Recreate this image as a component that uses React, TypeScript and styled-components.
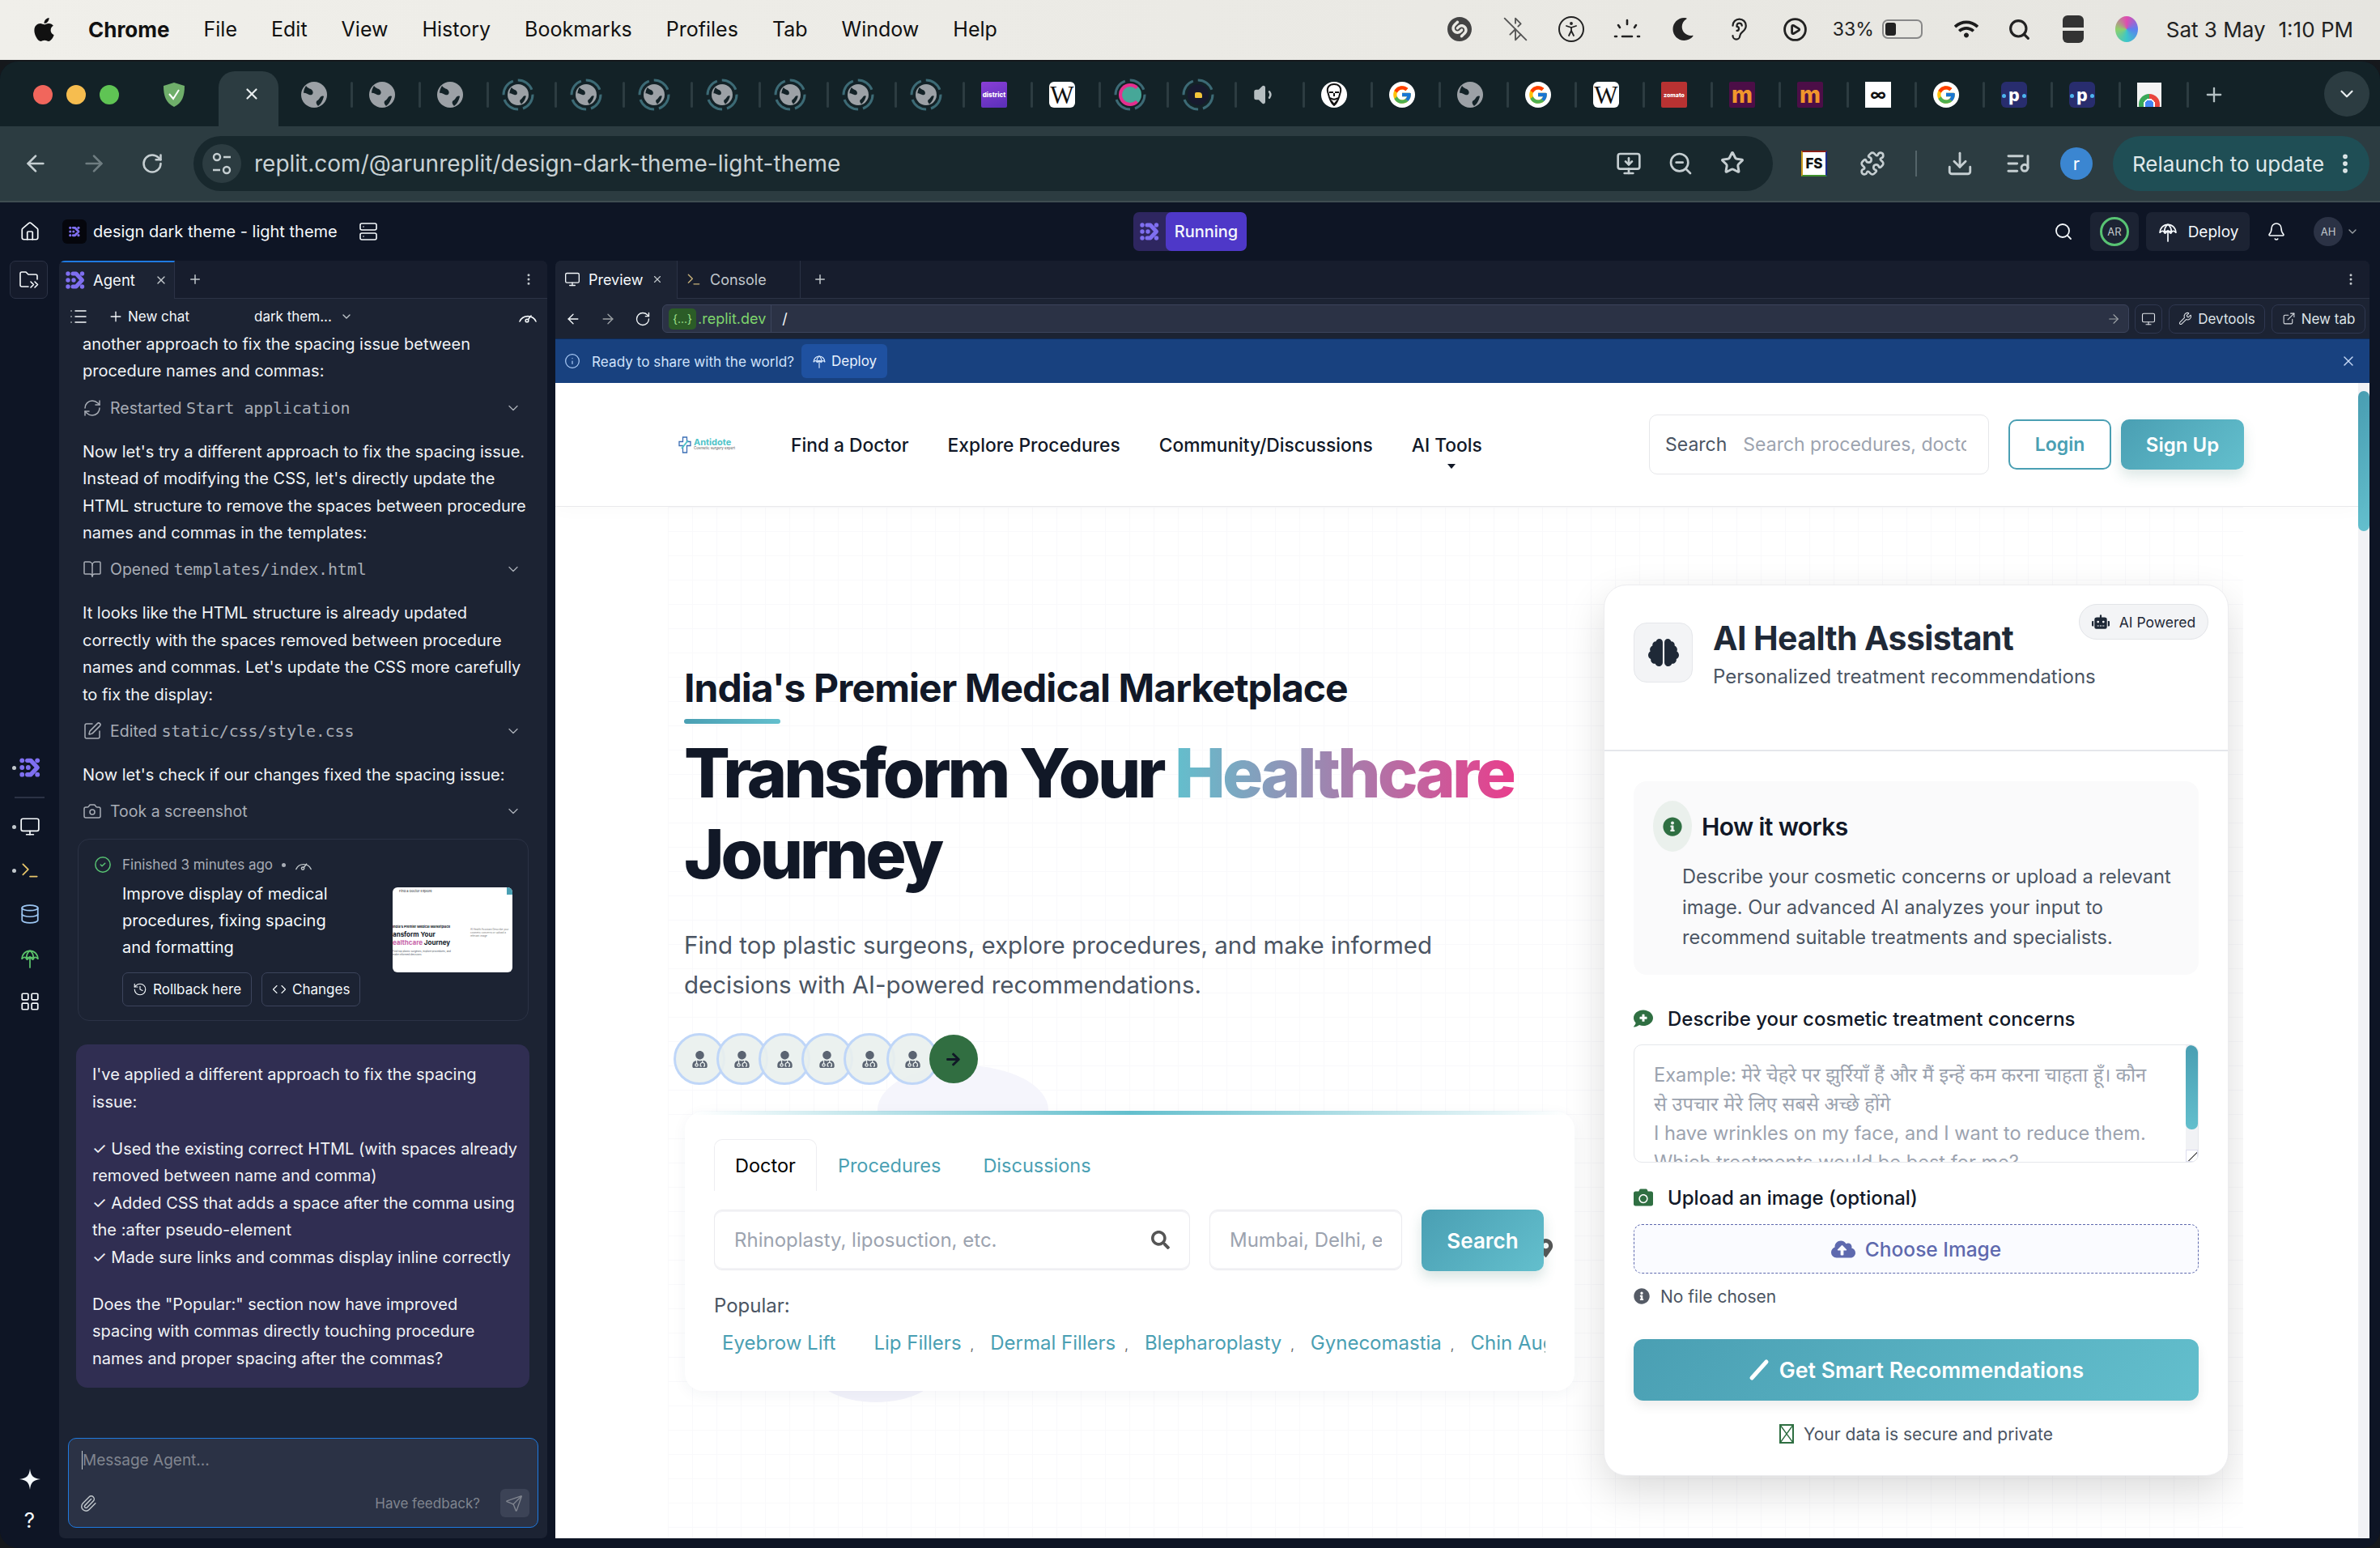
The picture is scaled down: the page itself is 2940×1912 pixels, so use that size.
import styled, { createGlobalStyle } from "styled-components";
import {
  ArrowLeft,
  ArrowRight,
  BluetoothOff,
  Bell,
  BookOpen,
  Camera,
  ChevronDown,
  CircleCheck,
  CirclePlay,
  Code,
  Database,
  Download,
  Ear,
  ExternalLink,
  History,
  House,
  Info,
  LayoutGrid,
  ListMusic,
  List,
  Monitor,
  MonitorDown,
  MoreVertical,
  Paperclip,
  PersonStanding,
  Plus,
  Puzzle,
  RefreshCw,
  RotateCw,
  Search,
  Send,
  Server,
  SquarePen,
  Star,
  Terminal,
  Volume1,
  Wrench,
  X,
  ZoomOut,
} from "lucide-react";
import {
  FaApple,
  FaArrowRight,
  FaBrain,
  FaCamera,
  FaCloudUploadAlt,
  FaCommentMedical,
  FaInfoCircle,
  FaMapMarkerAlt,
  FaMoon,
  FaRobot,
  FaSearch,
  FaUserMd,
  FaWifi,
} from "react-icons/fa";
import { FcGoogle } from "react-icons/fc";
import { SiShazam } from "react-icons/si";

const UI_FONT = `Inter, "Noto Sans", sans-serif`;
const PAGE_FONT = `Inter, "Noto Sans Devanagari", "Noto Sans", sans-serif`;
const TEAL = "#4a9fb3";
const TEAL_LIGHT = "#63bfcd";

const GlobalStyle = createGlobalStyle`
  html, body {
    margin: 0;
    padding: 0;
    background: #15181c;
  }
  * {
    box-sizing: border-box;
  }
`;

/* ---------- small drawings ---------- */

function AgentLogo({ size = 24 }: { size?: number }) {
  return (
    <svg width={size} height={size} viewBox="0 0 24 24" fill="#7f6ff0">
      <circle cx="3" cy="4" r="2.7" />
      <circle cx="20.5" cy="4" r="2.7" />
      <circle cx="3" cy="12" r="2.7" />
      <circle cx="10" cy="12" r="2.7" />
      <circle cx="3" cy="20" r="2.7" />
      <circle cx="20.5" cy="20" r="2.7" />
      <path d="M9 4 H13 L20.5 12 L13 20 H9" fill="none" stroke="#7f6ff0" strokeWidth="5" strokeLinecap="round" strokeLinejoin="round" />
    </svg>
  );
}

function GaugeGlyph({ size = 24, color = "#f5f9fc" }: { size?: number; color?: string }) {
  return (
    <svg width={size} height={size} viewBox="0 0 24 24" fill="none" stroke={color} strokeWidth="1.6" strokeLinecap="round">
      <path d="M2 18a11 11 0 0 1 20 0" />
      <circle cx="11" cy="17" r="1.8" />
      <path d="M12.5 15.5 L16 11" />
    </svg>
  );
}

function DeployGlyph({ size = 24, color = "currentColor" }: { size?: number; color?: string }) {
  return (
    <svg width={size} height={size} viewBox="0 0 24 24" fill="none" stroke={color} strokeWidth="1.6" strokeLinecap="round">
      <path d="M3 13a9 9 0 0 1 18 0" />
      <path d="M3 13c2-2 4-2 5 0 1-2 7-2 8 0 1-2 3-2 5 0" />
      <path d="M12 4c-3 2-4 5-4 9M12 4c3 2 4 5 4 9" />
      <path d="M12 23V11M9 14l3-3 3 3" />
    </svg>
  );
}

function FolderJump() {
  return (
    <svg width="26" height="24" viewBox="0 0 26 24" fill="none" stroke="#f5f9fc" strokeWidth="1.6" strokeLinecap="round" strokeLinejoin="round">
      <path d="M12 20H4a2 2 0 0 1-2-2V4a2 2 0 0 1 2-2h5l3 3h9a2 2 0 0 1 2 2v4" />
      <path d="M15 14l3.5 3.5L15 21M20 14l3.5 3.5L20 21" />
    </svg>
  );
}

function TuneIcon() {
  return (
    <svg width="24" height="30" viewBox="0 0 24 30" fill="none" stroke="#c5ced1" strokeWidth="2.4">
      <circle cx="6" cy="7" r="4" />
      <path d="M14 7h9M1 23h9" />
      <circle cx="18" cy="23" r="4" />
    </svg>
  );
}

function LogoCross() {
  return (
    <svg width="16" height="21" viewBox="0 0 16 21" fill="none" stroke="#3b6fb5" strokeWidth="1.3">
      <path d="M5.5 1h5v5.5H15v5h-4.5V20h-5v-8.500H1v-5h4.500Z" />
      <path d="M4 15 L12 5" stroke="#4ec3c8" strokeWidth="2" />
    </svg>
  );
}

function GlobeMark({ size = 32 }: { size?: number }) {
  return (
    <svg width={size} height={size} viewBox="0 0 32 32">
      <circle cx="16" cy="16" r="16" fill="#9ca1a6" />
      <path d="M6 5c3 4 6 3 8 6 2 4-1 6-4 5-3-1-5-3-7-2 0-3 1-6 3-9Z" fill="#132227" />
      <path d="M28 18c-2-1-4 0-5 2-1 2-3 3-4 4-1 2 0 4 2 6 3-2 6-7 7-12Z" fill="#132227" />
    </svg>
  );
}

function SpinRing({ children }: { children: React.ReactNode }) {
  return (
    <RingBox>
      <svg width="40" height="40" viewBox="0 0 40 40" fill="none" stroke="#3c6a75" strokeWidth="3">
        <circle cx="20" cy="20" r="18" strokeDasharray="22 6" />
      </svg>
      {children}
    </RingBox>
  );
}

const RingBox = styled.div`
  position: relative;
  width: 40px;
  height: 40px;
  margin-left: -4px;
  display: flex;
  align-items: center;
  justify-content: center;

  svg:first-child {
    position: absolute;
    inset: 0;
  }
`;

function KfcFace() {
  return (
    <svg width="32" height="32" viewBox="0 0 32 32">
      <circle cx="16" cy="16" r="16" fill="#fff" />
      <path d="M16 3c-6 0-9 4-8 9l2 7c1 3 3 8 6 10 3-2 5-7 6-10l2-7c1-5-2-9-8-9Z" fill="none" stroke="#111" strokeWidth="2" />
      <path d="M10 13h5M17 13h5M16 14v4M11 20c3 2 7 2 10 0M12 23l4 5 4-5" fill="none" stroke="#111" strokeWidth="2" />
    </svg>
  );
}

function WandIcon() {
  return (
    <svg width="26" height="28" viewBox="0 0 26 28" fill="none" stroke="#fff" strokeWidth="5" strokeLinecap="round">
      <path d="M4 24 L22 4" />
    </svg>
  );
}

function MissingGlyph() {
  return (
    <svg width="18" height="24" viewBox="0 0 18 24" fill="none" stroke="#2f6f42" strokeWidth="2">
      <rect x="1" y="1" width="16" height="22" />
      <path d="M1 1 L17 23 M17 1 L1 23" strokeWidth="1.4" />
    </svg>
  );
}

function BrightnessLow() {
  return (
    <svg width="34" height="30" viewBox="0 0 34 30" fill="#222" stroke="#222" strokeWidth="2.6" strokeLinecap="round">
      <path d="M17 4v5M6 10l2 3M28 10l-2 3M2 24h2M30 24h2M11 24h12" />
    </svg>
  );
}

type TabKind =
  | "globe" | "spin" | "district" | "wiki" | "pink" | "spinDark" | "speaker" | "kfc"
  | "google" | "zomato" | "magic" | "infinity" | "paytm" | "store";

function Favicon({ kind }: { kind: TabKind }) {
  switch (kind) {
    case "globe":
      return <GlobeMark />;
    case "spin":
      return (
        <SpinRing>
          <GlobeMark size={26} />
        </SpinRing>
      );
    case "district":
      return (
        <SquareIcon $bg="linear-gradient(160deg,#8a3fd6,#5a2fb8)" $color="#fff">
          <DistrictText>district</DistrictText>
        </SquareIcon>
      );
    case "wiki":
      return <SquareIcon $bg="#fff" $color="#111" $radius={6} $serif>W</SquareIcon>;
    case "pink":
      return (
        <SpinRing>
          <PinkDisc />
        </SpinRing>
      );
    case "spinDark":
      return (
        <SpinRing>
          <YellowDisc />
        </SpinRing>
      );
    case "speaker":
      return <Volume1 size={30} color="#b6bec1" fill="#b6bec1" />;
    case "kfc":
      return <KfcFace />;
    case "google":
      return (
        <RoundIcon>
          <FcGoogle size={26} />
        </RoundIcon>
      );
    case "zomato":
      return (
        <SquareIcon $bg="#b83232" $color="#fff">
          <ZomatoText>zomato</ZomatoText>
        </SquareIcon>
      );
    case "magic":
      return <SquareIcon $bg="#4c0e47" $color="#f0952c" $bold>m</SquareIcon>;
    case "infinity":
      return (
        <SquareIcon $bg="#fff" $color="#111" $radius={0}>
          <InfinityText>∞</InfinityText>
        </SquareIcon>
      );
    case "paytm":
      return (
        <SquareIcon $bg="#282d6e" $color="#fff" $radius={6} $bold>
          <PaytmText>p</PaytmText>
        </SquareIcon>
      );
    case "store":
      return <StoreBag />;
  }
}

const SquareIcon = styled.div<{ $bg: string; $color: string; $radius?: number; $serif?: boolean; $bold?: boolean }>`
  width: 32px;
  height: 32px;
  display: flex;
  align-items: center;
  justify-content: center;
  background: ${(p) => p.$bg};
  color: ${(p) => p.$color};
  border-radius: ${(p) => p.$radius ?? 2}px;
  font-family: ${(p) => (p.$serif ? `"Liberation Serif", serif` : `Inter, sans-serif`)};
  font-size: ${(p) => (p.$serif ? 31 : 28)}px;
  font-weight: ${(p) => (p.$bold ? 800 : 400)};
  line-height: 1;
  overflow: hidden;
`;

const DistrictText = styled.span`
  font-size: 8px;
  font-weight: 800;
`;

const ZomatoText = styled.span`
  font-size: 7px;
  font-weight: 800;
`;

const InfinityText = styled.span`
  font-size: 20px;
  font-weight: 700;
`;

const PaytmText = styled.span`
  position: relative;
  font-size: 21px;

  &::before,
  &::after {
    content: "";
    position: absolute;
    top: 9px;
    width: 5px;
    height: 5px;
    border-radius: 50%;
    background: #4db4ee;
  }
  &::before {
    left: -8px;
  }
  &::after {
    right: -8px;
  }
`;

const RoundIcon = styled.div`
  width: 32px;
  height: 32px;
  border-radius: 50%;
  background: #fff;
  display: flex;
  align-items: center;
  justify-content: center;
`;

const PinkDisc = styled.div`
  width: 28px;
  height: 28px;
  border-radius: 50%;
  background: #46a798;
  border: 4px solid #e52f8f;
  border-right-color: transparent;
`;

const YellowDisc = styled.div`
  width: 26px;
  height: 26px;
  border-radius: 50%;
  background: #171a2e;
  display: flex;
  align-items: center;
  justify-content: center;

  &::after {
    content: "";
    width: 9px;
    height: 7px;
    background: #f2c53a;
    border-radius: 2px 4px 1px 1px;
  }
`;

const StoreBag = styled.div`
  width: 30px;
  height: 30px;
  background: #f3f3f3;
  display: flex;
  align-items: flex-end;
  justify-content: center;
  overflow: hidden;

  &::after {
    content: "";
    width: 26px;
    height: 26px;
    margin-bottom: -10px;
    border-radius: 50%;
    background:
      radial-gradient(circle, #4285f4 0 28%, #fff 29% 38%, transparent 39%),
      conic-gradient(#e8453c 0 120deg, #f9bb2d 120deg 240deg, #3aa757 240deg);
  }
`;

/* ---------- data ---------- */

const MENU_ITEMS = ["File", "Edit", "View", "History", "Bookmarks", "Profiles", "Tab", "Window", "Help"];

const TABS: TabKind[] = [
  "globe", "globe", "globe",
  "spin", "spin", "spin", "spin", "spin", "spin", "spin",
  "district", "wiki", "pink", "spinDark", "speaker", "kfc", "google", "globe", "google",
  "wiki", "zomato", "magic", "magic", "infinity", "google", "paytm", "paytm", "store",
];

const POPULAR = ["Lip Fillers", "Dermal Fillers", "Blepharoplasty", "Gynecomastia", "Chin Augmentation"];

export default function App() {
  return (
    <>
      <GlobalStyle />
      <Desktop>
        <MenuBar>
          <FaApple size={33} />
          <AppName>Chrome</AppName>
          {MENU_ITEMS.map((item) => (
            <MenuItem key={item}>{item}</MenuItem>
          ))}
          <StatusArea>
            <StatusSlot><SiShazam size={30} color="#444" /></StatusSlot>
            <StatusSlot><BluetoothOff size={32} color="#555" strokeWidth={1.4} /></StatusSlot>
            <StatusSlot><RoundOutline><PersonStanding size={24} strokeWidth={1.8} /></RoundOutline></StatusSlot>
            <StatusSlot><BrightnessLow /></StatusSlot>
            <StatusSlot><FaMoon size={28} color="#222" /></StatusSlot>
            <StatusSlot><Ear size={30} color="#222" strokeWidth={1.8} /></StatusSlot>
            <StatusSlot><CirclePlay size={31} color="#222" strokeWidth={2.2} /></StatusSlot>
            <BatteryText>33%</BatteryText>
            <Battery />
            <WideSlot><FaWifi size={30} color="#1c1c1c" /></WideSlot>
            <WideSlot><Search size={29} color="#222" strokeWidth={2.6} /></WideSlot>
            <WideSlot><ControlCenter /></WideSlot>
            <WideSlot><SiriOrb /></WideSlot>
            <ClockText>Sat 3 May</ClockText>
            <ClockText>1:10 PM</ClockText>
          </StatusArea>
        </MenuBar>

        <BrowserWindow>
          <TabStrip>
            <TrafficLights>
              <Light $color="#f1665c" />
              <Light $color="#f6bd4f" />
              <Light $color="#5fc454" />
            </TrafficLights>
            <ShieldBox>
              <svg width="32" height="32" viewBox="0 0 32 32">
                <path d="M16 1 L29 5 C29 18 26 26 16 31 C6 26 3 18 3 5 Z" fill="#6fae6a" />
                <path d="M10 15l5 6 7-11" fill="none" stroke="#fff" strokeWidth="2" />
              </svg>
            </ShieldBox>
            <ActiveTab>
              <X size={22} color="#e8edee" strokeWidth={2.4} />
            </ActiveTab>
            {TABS.map((kind, i) => (
              <TabCell key={i}>
                <Favicon kind={kind} />
              </TabCell>
            ))}
            <NewTabSlot>
              <Plus size={28} color="#b4c0c3" />
            </NewTabSlot>
            <TabSearch>
              <ChevronDown size={26} color="#e8edee" />
            </TabSearch>
          </TabStrip>

          <Toolbar>
            <ToolSlot><ArrowLeft size={32} color="#c5ced1" strokeWidth={2} /></ToolSlot>
            <ToolSlot><ArrowRight size={32} color="#6f7d81" strokeWidth={2} /></ToolSlot>
            <ToolSlot><RotateCw size={28} color="#c5ced1" strokeWidth={2.2} /></ToolSlot>
            <Omnibox>
              <TuneButton><TuneIcon /></TuneButton>
              <UrlText>replit.com/@arunreplit/design-dark-theme-light-theme</UrlText>
              <OmniActions>
                <OmniSlot><MonitorDown size={32} color="#c5ced1" strokeWidth={2} /></OmniSlot>
                <OmniSlot><ZoomOut size={32} color="#c5ced1" strokeWidth={2} /></OmniSlot>
                <OmniSlot><Star size={30} color="#c5ced1" strokeWidth={2.4} /></OmniSlot>
              </OmniActions>
            </Omnibox>
            <FirstExtension>
              <FsIcon>FS</FsIcon>
            </FirstExtension>
            <ToolSlot><Puzzle size={32} color="#c5ced1" strokeWidth={2} /></ToolSlot>
            <ToolDivider />
            <ToolSlot><Download size={34} color="#c5ced1" strokeWidth={2} /></ToolSlot>
            <ToolSlot><ListMusic size={32} color="#c5ced1" strokeWidth={2.2} /></ToolSlot>
            <ToolSlot><ProfileDot>r</ProfileDot></ToolSlot>
            <RelaunchPill>
              Relaunch to update
              <MoreVertical size={30} color="#dfe8ea" strokeWidth={2.6} />
            </RelaunchPill>
          </Toolbar>

          <Shell>
            <AppHeader>
              <HeaderLeft>
                <HomeSlot><House size={26} color="#f5f9fc" strokeWidth={1.6} /></HomeSlot>
                <ProjectIcon><AgentLogo size={14} /></ProjectIcon>
                <ProjectTitle>design dark theme - light theme</ProjectTitle>
                <Server size={24} color="#f5f9fc" strokeWidth={1.6} />
              </HeaderLeft>
              <RunBadge>
                <RunIcon><AgentLogo size={24} /></RunIcon>
                <RunLabel>Running</RunLabel>
              </RunBadge>
              <HeaderRight>
                <Search size={24} color="#f5f9fc" strokeWidth={1.8} />
                <AvatarBox><RingAvatar>AR</RingAvatar></AvatarBox>
                <DeployBox>
                  <DeployGlyph size={26} color="#f5f9fc" />
                  Deploy
                </DeployBox>
                <Bell size={24} color="#f5f9fc" strokeWidth={1.6} />
                <UserAvatar>AH</UserAvatar>
                <ChevronDown size={16} color="#9da2a6" />
              </HeaderRight>
            </AppHeader>

            <Workspace>
              <Rail>
                <RailButton><FolderJump /></RailButton>
                <RailGroup>
                  <RailSlot $dot><AgentLogo size={26} /></RailSlot>
                  <RailDivider />
                  <RailSlot $dot><Monitor size={26} color="#f5f9fc" strokeWidth={1.6} /></RailSlot>
                  <RailSlot $dot><Terminal size={26} color="#e9c76b" strokeWidth={1.6} /></RailSlot>
                  <RailSlot><Database size={26} color="#9cc6f2" strokeWidth={1.6} /></RailSlot>
                  <RailSlot><DeployGlyph size={26} color="#5cc46b" /></RailSlot>
                  <RailSlot><LayoutGrid size={26} color="#f5f9fc" strokeWidth={1.6} /></RailSlot>
                </RailGroup>
                <RailBottom>
                  <RailSlot>
                    <svg width="26" height="26" viewBox="0 0 26 26" fill="#f5f9fc">
                      <path d="M13 0 C14 9 17 12 26 13 C17 14 14 17 13 26 C12 17 9 14 0 13 C9 12 12 9 13 0 Z" />
                    </svg>
                  </RailSlot>
                  <HelpMark>?</HelpMark>
                </RailBottom>
              </Rail>

              <AgentPanel>
                <PanelTabs>
                  <AgentTab>
                    <AgentLogo size={24} />
                    <TabText>Agent</TabText>
                    <TabClose><X size={16} color="#c2c8cc" /></TabClose>
                  </AgentTab>
                  <TabPlus><Plus size={18} color="#c2c8cc" /></TabPlus>
                  <TabMenu><MoreVertical size={18} color="#c2c8cc" /></TabMenu>
                </PanelTabs>
                <ChatBar>
                  <List size={24} color="#f5f9fc" strokeWidth={1.5} />
                  <NewChat>
                    <Plus size={20} color="#f5f9fc" strokeWidth={1.6} />
                    New chat
                  </NewChat>
                  <ChatName>dark them...</ChatName>
                  <ChevronDown size={16} color="#c2c8cc" />
                  <ChatGauge><GaugeGlyph size={24} /></ChatGauge>
                </ChatBar>

                <ChatScroll>
                  <Para>another approach to fix the spacing issue between procedure names and commas:</Para>
                  <ActionRow>
                    <RefreshCw size={24} strokeWidth={1.5} />
                    <ActionLabel>Restarted <Mono>Start application</Mono></ActionLabel>
                    <ChevronDown size={20} strokeWidth={1.6} />
                  </ActionRow>
                  <Para>
                    Now let's try a different approach to fix the spacing issue. Instead of modifying the CSS, let's directly
                    update the HTML structure to remove the spaces between procedure names and commas in the templates:
                  </Para>
                  <ActionRow>
                    <BookOpen size={24} strokeWidth={1.5} />
                    <ActionLabel>Opened <Mono>templates/index.html</Mono></ActionLabel>
                    <ChevronDown size={20} strokeWidth={1.6} />
                  </ActionRow>
                  <Para>
                    It looks like the HTML structure is already updated correctly with the spaces removed between procedure
                    names and commas. Let's update the CSS more carefully to fix the display:
                  </Para>
                  <ActionRow>
                    <SquarePen size={24} strokeWidth={1.5} />
                    <ActionLabel>Edited <Mono>static/css/style.css</Mono></ActionLabel>
                    <ChevronDown size={20} strokeWidth={1.6} />
                  </ActionRow>
                  <Para>Now let's check if our changes fixed the spacing issue:</Para>
                  <ActionRow>
                    <Camera size={24} strokeWidth={1.5} />
                    <ActionLabel>Took a screenshot</ActionLabel>
                    <ChevronDown size={20} strokeWidth={1.6} />
                  </ActionRow>

                  <FinishedCard>
                    <FinishedHead>
                      <CircleCheck size={22} color="#58c373" strokeWidth={1.6} />
                      <FinishedMeta>Finished 3 minutes ago</FinishedMeta>
                      <MetaDot />
                      <GaugeGlyph size={22} color="#c2c8cc" />
                    </FinishedHead>
                    <FinishedBody>
                      <FinishedText>
                        <FinishedTitle>Improve display of medical procedures, fixing spacing and formatting</FinishedTitle>
                        <FinishedActions>
                          <GhostButton><History size={18} strokeWidth={1.5} />Rollback here</GhostButton>
                          <GhostButton><Code size={18} strokeWidth={1.5} />Changes</GhostButton>
                        </FinishedActions>
                      </FinishedText>
                      <Thumb>
                        <ThumbNav>Find a Doctor  Explore</ThumbNav>
                        <ThumbColumns>
                          <div>
                            <ThumbLead>India's Premier Medical Marketplace</ThumbLead>
                            <ThumbHead>ansform Your</ThumbHead>
                            <ThumbHead><ThumbAccent>ealthcare</ThumbAccent> Journey</ThumbHead>
                            <ThumbSub>Find top plastic surgeons, explore procedures, and make informed decisions</ThumbSub>
                          </div>
                          <ThumbSide>AI Health Assistant Describe your cosmetic concerns or upload a relevant image</ThumbSide>
                        </ThumbColumns>
                      </Thumb>
                    </FinishedBody>
                  </FinishedCard>

                  <Bubble>
                    <BubbleBlock>I've applied a different approach to fix the spacing issue:</BubbleBlock>
                    <BubbleBlock>
                      ✓ Used the existing correct HTML (with spaces already removed between name and comma)
                      <br />
                      ✓ Added CSS that adds a space after the comma using the :after pseudo-element
                      <br />
                      ✓ Made sure links and commas display inline correctly
                    </BubbleBlock>
                    <BubbleBlock>
                      Does the "Popular:" section now have improved spacing with commas directly touching procedure names and
                      proper spacing after the commas?
                    </BubbleBlock>
                  </Bubble>
                </ChatScroll>

                <Composer>
                  <ComposerInput placeholder="Message Agent..." />
                  <ComposerFoot>
                    <Paperclip size={22} color="#c2c8cc" strokeWidth={1.6} />
                    <FeedbackText>Have feedback?</FeedbackText>
                    <SendButton><Send size={22} color="#80858f" strokeWidth={1.5} /></SendButton>
                  </ComposerFoot>
                </Composer>
              </AgentPanel>

              <Splitter />

              <PreviewPanel>
                <PreviewTabs>
                  <PreviewTab $active>
                    <Monitor size={20} color="#f5f9fc" strokeWidth={1.6} />
                    <TabLabel>Preview</TabLabel>
                    <X size={14} color="#c2c8cc" />
                  </PreviewTab>
                  <ConsoleTab>
                    <Terminal size={20} color="#c9b27a" strokeWidth={1.6} />
                    <TabLabel $muted>Console</TabLabel>
                  </ConsoleTab>
                  <TabPlusWide><Plus size={18} color="#c2c8cc" /></TabPlusWide>
                  <TabMenu><MoreVertical size={18} color="#c2c8cc" /></TabMenu>
                </PreviewTabs>

                <UrlBar>
                  <UrlNav><ArrowLeft size={20} color="#f5f9fc" strokeWidth={1.6} /></UrlNav>
                  <UrlNav><ArrowRight size={20} color="#9da2a6" strokeWidth={1.6} /></UrlNav>
                  <UrlNav><RotateCw size={20} color="#f5f9fc" strokeWidth={1.6} /></UrlNav>
                  <UrlField>
                    <DomainTag>{"{...}"}</DomainTag>
                    <DomainText>.replit.dev</DomainText>
                    <PathText>/</PathText>
                    <ArrowRight size={18} color="#9da2a6" strokeWidth={1.5} />
                  </UrlField>
                  <UrlTool $width={34}><Monitor size={18} strokeWidth={1.5} /></UrlTool>
                  <UrlTool $width={119}><Wrench size={17} strokeWidth={1.5} />Devtools</UrlTool>
                  <UrlTool $width={116}><ExternalLink size={17} strokeWidth={1.5} />New tab</UrlTool>
                </UrlBar>

                <DeployBanner>
                  <Info size={20} color="#a9c9f5" strokeWidth={1.5} />
                  <BannerText>Ready to share with the world?</BannerText>
                  <BannerButton>
                    <DeployGlyph size={18} color="#d5e6fb" />
                    Deploy
                  </BannerButton>
                  <BannerClose><X size={20} color="#c9dcf7" strokeWidth={1.6} /></BannerClose>
                </DeployBanner>

                <PageViewport>
                  <PageColumn>
                    <SiteNav>
                      <SiteLogo>
                        <LogoCross />
                        <LogoWords>
                          <LogoName>Antidote</LogoName>
                          <LogoTag>Cosmetic surgery expert</LogoTag>
                        </LogoWords>
                      </SiteLogo>
                      <NavLinks>
                        <NavLink>Find a Doctor</NavLink>
                        <NavLink>Explore Procedures</NavLink>
                        <NavLink>Community/Discussions</NavLink>
                        <NavLink $caret>AI Tools</NavLink>
                      </NavLinks>
                      <NavSearch>
                        <NavSearchLabel>Search</NavSearchLabel>
                        <NavSearchInput placeholder="Search procedures, doctors..." />
                      </NavSearch>
                      <LoginButton>Login</LoginButton>
                      <SignUpButton>Sign Up</SignUpButton>
                    </SiteNav>

                    <Hero>
                      <BlobTop />
                      <BlobBottom />
                      <HeroLeft>
                        <HeroLead>India's Premier Medical Marketplace</HeroLead>
                        <LeadBar />
                        <HeroTitle>
                          Transform Your <GradientWord>Healthcare</GradientWord> Journey
                        </HeroTitle>
                        <HeroSub>
                          Find top plastic surgeons, explore procedures, and make informed decisions with AI-powered
                          recommendations.
                        </HeroSub>
                        <AvatarRow>
                          {[0, 1, 2, 3, 4, 5].map((i) => (
                            <DoctorAvatar key={i}>
                              <FaUserMd size={21} color="#5b6472" />
                            </DoctorAvatar>
                          ))}
                          <MoreDoctors>
                            <FaArrowRight size={19} color="#111827" />
                          </MoreDoctors>
                        </AvatarRow>

                        <SearchCard>
                          <SearchTabs>
                            <SearchTab $active>Doctor</SearchTab>
                            <SearchTab>Procedures</SearchTab>
                            <SearchTab>Discussions</SearchTab>
                          </SearchTabs>
                          <SearchRow>
                            <FieldBox $width={588}>
                              <FieldInput placeholder="Rhinoplasty, liposuction, etc." />
                              <FaSearch size={23} color="#555" />
                            </FieldBox>
                            <FieldBox $width={238}>
                              <FieldInput placeholder="Mumbai, Delhi, etc." />
                            </FieldBox>
                            <SearchButton>Search</SearchButton>
                            <PinMark><FaMapMarkerAlt size={23} color="#555" /></PinMark>
                          </SearchRow>
                          <PopularLabel>Popular:</PopularLabel>
                          <PopularRow>
                            <PopularLink $first>Eyebrow Lift</PopularLink>
                            {POPULAR.map((name, i) => (
                              <PopularLink key={name}>
                                {name}
                                {i < POPULAR.length - 1 && <Comma>,</Comma>}
                              </PopularLink>
                            ))}
                          </PopularRow>
                        </SearchCard>
                      </HeroLeft>

                      <AssistantCard>
                        <AssistantHead>
                          <BrainBox><FaBrain size={38} color="#1f2937" /></BrainBox>
                          <div>
                            <AssistantTitle>AI Health Assistant</AssistantTitle>
                            <AssistantSub>Personalized treatment recommendations</AssistantSub>
                          </div>
                          <PoweredBadge>
                            <FaRobot size={22} color="#1f2937" />
                            AI Powered
                          </PoweredBadge>
                        </AssistantHead>

                        <AssistantBody>
                          <HowBox>
                            <HowHead>
                              <HowIcon><FaInfoCircle size={24} color="#2f6f42" /></HowIcon>
                              <HowTitle>How it works</HowTitle>
                            </HowHead>
                            <HowText>
                              Describe your cosmetic concerns or upload a relevant image. Our advanced AI analyzes your input to
                              recommend suitable treatments and specialists.
                            </HowText>
                          </HowBox>

                          <FieldLabel>
                            <FaCommentMedical size={24} color="#2f6f42" />
                            Describe your cosmetic treatment concerns
                          </FieldLabel>
                          <ConcernBox>
                            Example: मेरे चेहरे पर झुर्रियाँ हैं और मैं इन्हें कम करना चाहता हूँ। कौन
                            <br />
                            से उपचार मेरे लिए सबसे अच्छे होंगे
                            <br />
                            I have wrinkles on my face, and I want to reduce them.
                            <br />
                            Which treatments would be best for me?
                            <ConcernTrack><ConcernThumb /><ConcernGrip /></ConcernTrack>
                          </ConcernBox>

                          <UploadLabel>
                            <FaCamera size={24} color="#2f6f42" />
                            Upload an image (optional)
                          </UploadLabel>
                          <ChooseBox>
                            <FaCloudUploadAlt size={30} />
                            Choose Image
                          </ChooseBox>
                          <NoFile>
                            <FaInfoCircle size={20} color="#555b66" />
                            No file chosen
                          </NoFile>
                          <SmartButton>
                            <WandIcon />
                            Get Smart Recommendations
                          </SmartButton>
                          <SecureNote>
                            <MissingGlyph />
                            Your data is secure and private
                          </SecureNote>
                        </AssistantBody>
                      </AssistantCard>
                    </Hero>
                  </PageColumn>
                  <PageScrollbar>
                    <PageThumb />
                  </PageScrollbar>
                </PageViewport>
              </PreviewPanel>
            </Workspace>
          </Shell>
        </BrowserWindow>
      </Desktop>
    </>
  );
}

/* ---------- desktop and menu bar ---------- */

const Desktop = styled.div`
  width: 2940px;
  height: 1912px;
  overflow: hidden;
  display: flex;
  flex-direction: column;
  background: #15181c;
`;

const MenuBar = styled.div`
  height: 74px;
  flex: none;
  display: flex;
  align-items: center;
  padding: 0 33px 2px 38px;
  gap: 42px;
  background: linear-gradient(90deg, #f0efea, #e6e5e0);
  font-family: Inter, sans-serif;
  font-size: 25px;
  color: #111;
`;

const AppName = styled.span`
  font-size: 26px;
  font-weight: 700;
  margin-left: -4px;
`;

const MenuItem = styled.span`
  font-weight: 400;
`;

const StatusArea = styled.div`
  margin-left: auto;
  display: flex;
  align-items: center;
  color: #222;
`;

const StatusSlot = styled.div`
  width: 69px;
  display: flex;
  justify-content: center;
  align-items: center;
`;

const WideSlot = styled(StatusSlot)`
  width: 66px;
`;

const RoundOutline = styled.div`
  width: 32px;
  height: 32px;
  border: 2.4px solid #222;
  border-radius: 50%;
  display: flex;
  align-items: center;
  justify-content: center;
`;

const BatteryText = styled.span`
  font-size: 23px;
  margin-left: 12px;
  margin-right: 10px;
`;

const Battery = styled.div`
  width: 50px;
  height: 24px;
  border: 2px solid #888;
  border-radius: 7px;
  padding: 2px;
  margin-right: 21px;

  &::before {
    content: "";
    display: block;
    width: 13px;
    height: 100%;
    background: #222;
    border-radius: 3px;
  }
`;

const ControlCenter = styled.div`
  width: 26px;
  height: 34px;
  border-radius: 6px;
  background: linear-gradient(180deg, #333 0 44%, transparent 44% 56%, #333 56%);
`;

const SiriOrb = styled.div`
  width: 28px;
  height: 32px;
  border-radius: 50%;
  background: conic-gradient(#e04bb0, #5b7ff0, #3cc7c9, #8fd06a, #e04bb0);
`;

const ClockText = styled.span`
  margin-left: 16px;
  font-size: 26px;
`;

/* ---------- browser chrome ---------- */

const BrowserWindow = styled.div`
  flex: 1;
  margin-top: 2px;
  display: flex;
  flex-direction: column;
  border-radius: 22px;
  overflow: hidden;
  background: #0e1525;
  padding-bottom: 12px;
`;

const TabStrip = styled.div`
  height: 80px;
  flex: none;
  display: flex;
  align-items: flex-start;
  background: #132227;
  padding-left: 41px;
`;

const TrafficLights = styled.div`
  display: flex;
  gap: 17px;
  margin-top: 29px;
`;

const Light = styled.div<{ $color: string }>`
  width: 24px;
  height: 24px;
  border-radius: 50%;
  background: ${(p) => p.$color};
`;

const ShieldBox = styled.div`
  margin: 25px 0 0 52px;
  height: 32px;
`;

const ActiveTab = styled.div`
  width: 74px;
  height: 68px;
  margin: 12px 8px 0 39px;
  background: #2c3c41;
  border-radius: 20px 20px 0 0;
  display: flex;
  align-items: flex-start;
  justify-content: center;
  padding: 17px 0 0 8px;
`;

const TabCell = styled.div`
  width: 84px;
  height: 32px;
  margin-top: 25px;
  flex: none;
  display: flex;
  align-items: center;
  padding-left: 20px;
  position: relative;

  &::after {
    content: "";
    position: absolute;
    right: 0;
    top: 0;
    width: 3px;
    height: 32px;
    border-radius: 2px;
    background: #2c3c41;
  }
`;

const NewTabSlot = styled.div`
  margin: 27px 0 0 17px;
`;

const TabSearch = styled.div`
  width: 56px;
  height: 56px;
  margin: 12px 13px 0 auto;
  border-radius: 50%;
  background: #2c3c41;
  display: flex;
  align-items: center;
  justify-content: center;
`;

const Toolbar = styled.div`
  height: 94px;
  flex: none;
  display: flex;
  align-items: center;
  padding: 0 0 0 8px;
  background: #2c3c41;
  border-bottom: 2px solid #3f4d52;
`;

const ToolSlot = styled.div`
  width: 72px;
  flex: none;
  display: flex;
  justify-content: center;
  align-items: center;
`;

const Omnibox = styled.div`
  width: 1951px;
  height: 68px;
  margin-left: 15px;
  border-radius: 34px;
  background: #18282d;
  display: flex;
  align-items: center;
  padding: 0 18px 0 11px;
`;

const TuneButton = styled.div`
  width: 48px;
  height: 48px;
  border-radius: 50%;
  background: #2c3c41;
  display: flex;
  align-items: center;
  justify-content: center;
`;

const UrlText = styled.span`
  margin-left: 16px;
  font-family: Inter, sans-serif;
  font-size: 28px;
  color: #c9d2d5;
`;

const OmniActions = styled.div`
  margin-left: auto;
  display: flex;
`;

const OmniSlot = styled.div`
  width: 64px;
  display: flex;
  justify-content: center;
`;

const FirstExtension = styled(ToolSlot)`
  margin-left: 15px;
`;

const FsIcon = styled.div`
  width: 32px;
  height: 32px;
  background: #fff;
  border: 2px solid;
  border-color: #8a1f17 #1a2a8c #3f8f2c #c99a1c;
  color: #111;
  font-family: Inter, sans-serif;
  font-weight: 800;
  font-size: 17px;
  display: flex;
  align-items: center;
  justify-content: center;
`;

const ToolDivider = styled.div`
  width: 36px;
  height: 32px;
  flex: none;
  display: flex;
  justify-content: center;

  &::before {
    content: "";
    width: 2px;
    background: #55656a;
  }
`;

const ProfileDot = styled.div`
  width: 40px;
  height: 40px;
  border-radius: 50%;
  background: #3b86d1;
  color: #fff;
  font-family: Inter, sans-serif;
  font-size: 22px;
  display: flex;
  align-items: center;
  justify-content: center;
`;

const RelaunchPill = styled.div`
  width: 317px;
  height: 68px;
  margin-left: 9px;
  flex: none;
  border-radius: 34px;
  background: #1f4e55;
  color: #dfe8ea;
  font-family: Inter, sans-serif;
  font-size: 26px;
  display: flex;
  align-items: center;
  justify-content: space-between;
  padding: 0 15px 0 24px;
  white-space: nowrap;
`;

/* ---------- replit shell ---------- */

const Shell = styled.div`
  flex: 1;
  min-height: 0;
  display: flex;
  flex-direction: column;
  background: #0e1525;
  font-family: ${UI_FONT};
  color: #f5f9fc;
`;

const AppHeader = styled.div`
  height: 72px;
  flex: none;
  display: grid;
  grid-template-columns: 1400px 140px 1fr;
  align-items: center;
`;

const HeaderLeft = styled.div`
  display: flex;
  align-items: center;
`;

const HomeSlot = styled.div`
  width: 73px;
  display: flex;
  justify-content: center;
`;

const ProjectIcon = styled.div`
  width: 30px;
  height: 30px;
  margin-left: 4px;
  background: #05060c;
  border-radius: 6px;
  display: flex;
  align-items: center;
  justify-content: center;
`;

const ProjectTitle = styled.span`
  margin: 0 26px 0 8px;
  font-size: 20px;
`;

const RunBadge = styled.div`
  height: 48px;
  display: flex;
  border-radius: 7px;
  overflow: hidden;
  background: #2e2660;
`;

const RunIcon = styled.div`
  width: 40px;
  display: flex;
  align-items: center;
  justify-content: center;
`;

const RunLabel = styled.div`
  flex: 1;
  background: #4e38c8;
  border-radius: 7px;
  display: flex;
  align-items: center;
  justify-content: center;
  font-size: 20px;
  font-weight: 500;
`;

const HeaderRight = styled.div`
  display: flex;
  align-items: center;
  justify-content: flex-end;
  padding-right: 26px;
`;

const AvatarBox = styled.div`
  width: 60px;
  height: 48px;
  margin-left: 21px;
  background: #1c2333;
  border-radius: 7px;
  display: flex;
  align-items: center;
  justify-content: center;
`;

const RingAvatar = styled.div`
  width: 36px;
  height: 36px;
  border-radius: 50%;
  border: 3px solid #58c373;
  color: #c2c8cc;
  font-size: 13px;
  display: flex;
  align-items: center;
  justify-content: center;
`;

const DeployBox = styled.div`
  width: 128px;
  height: 48px;
  margin: 0 21px 0 9px;
  background: #1c2333;
  border-radius: 7px;
  display: flex;
  align-items: center;
  justify-content: center;
  gap: 12px;
  font-size: 19px;
`;

const UserAvatar = styled.div`
  width: 36px;
  height: 36px;
  margin: 0 4px 0 34px;
  border-radius: 50%;
  background: #2b3245;
  color: #c2c8cc;
  font-size: 13px;
  display: flex;
  align-items: center;
  justify-content: center;
`;

const Workspace = styled.div`
  flex: 1;
  min-height: 0;
  display: flex;
`;

const Rail = styled.div`
  width: 73px;
  flex: none;
  display: flex;
  flex-direction: column;
`;

const RailButton = styled.div`
  width: 47px;
  height: 47px;
  margin-left: 12px;
  border: 1px solid #2b3245;
  border-radius: 7px;
  background: #151b2b;
  display: flex;
  align-items: center;
  justify-content: center;
`;

const RailGroup = styled.div`
  margin-top: 552px;
`;

const RailSlot = styled.div<{ $dot?: boolean }>`
  height: 54px;
  position: relative;
  display: flex;
  align-items: center;
  justify-content: center;

  ${(p) =>
    p.$dot &&
    `&::before {
      content: "";
      position: absolute;
      left: 15px;
      top: 25px;
      width: 5px;
      height: 5px;
      border-radius: 50%;
      background: #c2c8cc;
    }`}
`;

const RailDivider = styled.div`
  height: 2px;
  margin: 9px 18px 8px;
  background: #2b3245;
`;

const RailBottom = styled.div`
  margin-top: auto;
`;

const HelpMark = styled.div`
  height: 46px;
  display: flex;
  align-items: center;
  justify-content: center;
  font-size: 26px;
  color: #f5f9fc;
`;

/* ---------- agent panel ---------- */

const AgentPanel = styled.div`
  width: 603px;
  flex: none;
  display: flex;
  flex-direction: column;
  background: #1c2333;
  border-radius: 7px;
  overflow: hidden;
`;

const PanelTabs = styled.div`
  height: 47px;
  flex: none;
  display: flex;
  align-items: center;
  background: #171d2d;
  border-bottom: 1px solid #2b3245;
`;

const AgentTab = styled.div`
  width: 143px;
  height: 47px;
  display: flex;
  align-items: center;
  padding-left: 8px;
  background: #1c2333;
  border-top: 2px solid #1f7ae0;
  border-right: 1px solid #2b3245;
`;

const TabText = styled.span`
  margin-left: 10px;
  font-size: 18.5px;
`;

const TabClose = styled.span`
  margin-left: auto;
  margin-right: 8px;
  display: flex;
`;

const TabPlus = styled.span`
  margin-left: 16px;
  display: flex;
`;

const TabMenu = styled.span`
  margin-left: auto;
  margin-right: 14px;
  display: flex;
`;

const ChatBar = styled.div`
  height: 40px;
  flex: none;
  display: flex;
  align-items: center;
  padding: 4px 12px 0;
`;

const NewChat = styled.div`
  margin-left: 24px;
  display: flex;
  align-items: center;
  gap: 5px;
  font-size: 17px;
`;

const ChatName = styled.div`
  margin: 0 10px 0 80px;
  font-size: 17px;
`;

const ChatGauge = styled.span`
  margin-left: auto;
  display: flex;
`;

const ChatScroll = styled.div`
  flex: 1;
  min-height: 0;
  padding: 0 22px 0 21px;
  overflow: hidden;
`;

const Para = styled.p`
  margin: 0 0 11px 8px;
  font-size: 20px;
  line-height: 33.4px;
  color: #f0f3f6;
`;

const ActionRow = styled.div`
  height: 34px;
  margin: 0 10px 21px 8px;
  display: flex;
  align-items: center;
  gap: 10px;
  color: #a8adb6;

  svg:last-child {
    margin-left: auto;
  }
`;

const ActionLabel = styled.span`
  font-size: 19.5px;
`;

const Mono = styled.span`
  font-family: "DejaVu Sans Mono", "Liberation Mono", monospace;
  font-size: 20px;
  letter-spacing: -0.14px;
`;

const FinishedCard = styled.div`
  height: 225px;
  margin: -4px 1px 29px 2px;
  padding: 15px 19px 0 19px;
  border: 1px solid #2b3245;
  border-radius: 14px;
`;

const FinishedHead = styled.div`
  height: 32px;
  display: flex;
  align-items: center;
`;

const FinishedMeta = styled.span`
  margin-left: 13px;
  font-size: 17px;
  color: #a8adb6;
`;

const MetaDot = styled.span`
  width: 5px;
  height: 5px;
  margin: 0 11px;
  border-radius: 50%;
  background: #a8adb6;
`;

const FinishedBody = styled.div`
  display: flex;
  padding-left: 35px;
  margin-top: 4px;
`;

const FinishedText = styled.div`
  width: 334px;
`;

const FinishedTitle = styled.div`
  width: 285px;
  font-size: 20px;
  line-height: 33px;
`;

const FinishedActions = styled.div`
  margin-top: 14px;
  display: flex;
  gap: 12px;
`;

const GhostButton = styled.div`
  height: 42px;
  padding: 0 12px;
  display: flex;
  align-items: center;
  gap: 7px;
  border: 1px solid #3c445c;
  border-radius: 7px;
  font-size: 17px;
  white-space: nowrap;
`;

const Thumb = styled.div`
  width: 148px;
  height: 105px;
  margin-top: 8px;
  position: relative;
  background: #fff;
  border-radius: 6px;
  overflow: hidden;
  color: #111827;
  font-family: Inter, sans-serif;
  padding-top: 2px;

  &::after {
    content: "";
    position: absolute;
    top: 0;
    right: 0;
    width: 7px;
    height: 9px;
    background: ${TEAL};
  }
`;

const ThumbNav = styled.div`
  height: 44px;
  font-size: 4px;
  padding-left: 8px;
`;

const ThumbColumns = styled.div`
  display: flex;
  justify-content: space-between;
`;

const ThumbLead = styled.div`
  font-size: 4px;
  font-weight: 700;
  margin-bottom: 2px;
  white-space: nowrap;
`;

const ThumbHead = styled.div`
  font-size: 8px;
  font-weight: 700;
  line-height: 10px;
  white-space: nowrap;
`;

const ThumbAccent = styled.span`
  color: #c763a8;
`;

const ThumbSub = styled.div`
  width: 74px;
  margin-top: 4px;
  font-size: 3px;
  color: #4b5563;
`;

const ThumbSide = styled.div`
  width: 52px;
  margin-top: 4px;
  font-size: 3px;
  color: #777;
`;

const Bubble = styled.div`
  padding: 21px 14px 19px 20px;
  background: #302e52;
  border-radius: 14px;
  font-size: 20px;
  line-height: 33.5px;
  color: #f0f3f6;
`;

const BubbleBlock = styled.p`
  margin: 0 0 24.5px;

  &:last-child {
    margin-bottom: 0;
  }
`;

const Composer = styled.div`
  height: 111px;
  flex: none;
  margin: 0 11px 13px;
  padding: 15px 10px 12px 16px;
  background: #2b3245;
  border: 1px solid #1f7ae0;
  border-radius: 10px;
  display: flex;
  flex-direction: column;
  justify-content: space-between;

  svg:first-child {
    margin-left: -3px;
  }
`;

const ComposerInput = styled.input`
  background: none;
  border: none;
  outline: none;
  padding: 0;
  font-family: ${UI_FONT};
  font-size: 19px;
  color: #f5f9fc;
  border-left: 1px solid #c2c8cc;

  &::placeholder {
    color: #80858f;
  }
`;

const ComposerFoot = styled.div`
  display: flex;
  align-items: center;
`;

const FeedbackText = styled.span`
  margin-left: auto;
  margin-right: 25px;
  font-size: 17px;
  color: #80858f;
`;

const SendButton = styled.div`
  width: 36px;
  height: 35px;
  background: #3c4356;
  border-radius: 6px;
  display: flex;
  align-items: center;
  justify-content: center;
`;

const Splitter = styled.div`
  width: 10px;
  flex: none;
`;

/* ---------- preview panel ---------- */

const PreviewPanel = styled.div`
  width: 2241px;
  flex: none;
  display: flex;
  flex-direction: column;
  overflow: hidden;
  border-radius: 7px 7px 0 0;
  background: #1c2333;
`;

const PreviewTabs = styled.div`
  height: 47px;
  flex: none;
  display: flex;
  align-items: center;
  background: #171d2d;
  border-bottom: 1px solid #2b3245;
`;

const PreviewTab = styled.div<{ $active?: boolean }>`
  width: 151px;
  height: 47px;
  display: flex;
  align-items: center;
  padding-left: 11px;
  gap: 10px;
  background: ${(p) => (p.$active ? "#1c2333" : "transparent")};
  border-right: 1px solid #2b3245;
`;

const ConsoleTab = styled(PreviewTab)`
  width: 152px;
  padding-left: 10px;
`;

const TabLabel = styled.span<{ $muted?: boolean }>`
  font-size: 18px;
  color: ${(p) => (p.$muted ? "#c2c8cc" : "#f5f9fc")};
`;

const TabPlusWide = styled.span`
  margin-left: 15px;
  display: flex;
`;

const UrlBar = styled.div`
  height: 49px;
  flex: none;
  display: flex;
  align-items: center;
  background: #1c2333;
`;

const UrlNav = styled.div`
  width: 43px;
  flex: none;
  display: flex;
  justify-content: center;
`;

const UrlField = styled.div`
  width: 1812px;
  height: 35px;
  flex: none;
  margin: 0 7px 0 3px;
  display: flex;
  align-items: center;
  padding: 0 9px 0 7px;
  background: #2b3245;
  border: 1px solid #3c445c;
  border-radius: 6px;

  svg {
    margin-left: auto;
  }
`;

const DomainTag = styled.span`
  width: 34px;
  height: 26px;
  background: #2b5c27;
  border-radius: 5px;
  color: #9fe08c;
  font-size: 14px;
  display: flex;
  align-items: center;
  justify-content: center;
`;

const DomainText = styled.span`
  margin-left: 2px;
  padding-right: 6px;
  font-size: 18px;
  color: #7ed66c;
  border-right: 1px solid #3c445c;
  line-height: 33px;
`;

const PathText = styled.span`
  margin-left: 13px;
  font-size: 18px;
`;

const UrlTool = styled.div<{ $width: number }>`
  width: ${(p) => p.$width}px;
  height: 36px;
  margin-right: 8px;
  flex: none;
  display: flex;
  align-items: center;
  justify-content: center;
  gap: 7px;
  border: 1px solid #2f3750;
  border-radius: 8px;
  font-size: 17px;
  color: #dfe3e8;
  white-space: nowrap;
`;

const DeployBanner = styled.div`
  height: 55px;
  flex: none;
  display: flex;
  align-items: center;
  padding: 0 16px 0 11px;
  background: #18417f;
  border-top: 1px solid #0f2a54;
`;

const BannerText = styled.span`
  margin: 0 9px 0 14px;
  font-size: 17.2px;
  color: #cfe2fb;
`;

const BannerButton = styled.div`
  width: 106px;
  height: 42px;
  display: flex;
  align-items: center;
  justify-content: center;
  gap: 6px;
  background: #1f51a0;
  border-radius: 6px;
  font-size: 17px;
  color: #eaf2fd;
`;

const BannerClose = styled.span`
  margin-left: auto;
  display: flex;
`;

const PageViewport = styled.div`
  flex: 1;
  min-height: 0;
  display: flex;
  background: #fff;
  font-family: ${PAGE_FONT};
`;

const PageColumn = styled.div`
  flex: 1;
  min-width: 0;
  display: flex;
  flex-direction: column;
`;

const PageScrollbar = styled.div`
  width: 14px;
  flex: none;
  padding-top: 10px;
  background: #f1f2f5;
`;

const PageThumb = styled.div`
  height: 173px;
  border-radius: 7px;
  background: linear-gradient(180deg, ${TEAL}, ${TEAL_LIGHT});
`;

/* ---------- site nav ---------- */

const SiteNav = styled.div`
  height: 153px;
  flex: none;
  display: flex;
  align-items: center;
  padding: 0 141px 0 152px;
  border-bottom: 1px solid #e9e9ec;
  box-shadow: 0 6px 20px rgba(0, 0, 0, 0.02);
  position: relative;
  z-index: 2;
  background: #fff;
`;

const SiteLogo = styled.div`
  width: 73px;
  height: 20px;
  display: flex;
  align-items: center;
  gap: 3px;
`;

const LogoWords = styled.div`
  display: flex;
  flex-direction: column;
  line-height: 1;
`;

const LogoName = styled.span`
  font-size: 11px;
  font-weight: 700;
  color: #4ec3c8;
`;

const LogoTag = styled.span`
  font-size: 4.4px;
  color: #555;
  white-space: nowrap;
`;

const NavLinks = styled.div`
  margin-left: 66px;
  display: flex;
  gap: 48px;
`;

const NavLink = styled.span<{ $caret?: boolean }>`
  position: relative;
  font-size: 22.8px;
  font-weight: 500;
  color: #111827;

  ${(p) =>
    p.$caret &&
    `&::after {
      content: "";
      position: absolute;
      left: 44px;
      top: 37px;
      border: 5px solid transparent;
      border-top: 6px solid #111827;
      border-bottom: 0;
    }`}
`;

const NavSearch = styled.div`
  width: 420px;
  height: 74px;
  margin-left: auto;
  display: flex;
  align-items: center;
  padding-left: 19px;
  border: 1px solid #e6e7ea;
  border-radius: 10px;
  overflow: hidden;
`;

const NavSearchLabel = styled.span`
  font-size: 23px;
  color: #4b5563;
`;

const NavSearchInput = styled.input`
  flex: none;
  width: 276px;
  margin-left: 20px;
  border: none;
  outline: none;
  padding: 0;
  font-family: ${PAGE_FONT};
  font-size: 23px;

  &::placeholder {
    color: #9ca3af;
  }
`;

const LoginButton = styled.div`
  width: 127px;
  height: 62px;
  margin-left: 24px;
  display: flex;
  align-items: center;
  justify-content: center;
  border: 2px solid ${TEAL};
  border-radius: 10px;
  font-size: 23px;
  font-weight: 600;
  color: ${TEAL};
`;

const SignUpButton = styled.div`
  width: 152px;
  height: 62px;
  margin-left: 12px;
  display: flex;
  align-items: center;
  justify-content: center;
  border-radius: 10px;
  background: linear-gradient(135deg, ${TEAL}, ${TEAL_LIGHT});
  font-size: 24px;
  font-weight: 600;
  color: #fff;
  box-shadow: 0 8px 16px rgba(60, 120, 110, 0.18);
`;

/* ---------- hero ---------- */

const Hero = styled.div`
  flex: 1;
  min-height: 0;
  width: 1946px;
  margin-left: 139px;
  padding: 96px 18px 0 20px;
  display: flex;
  justify-content: space-between;
  align-items: flex-start;
  position: relative;
  overflow: hidden;
  background-image:
    linear-gradient(#f9f9fb 1px, transparent 1px),
    linear-gradient(90deg, #f9f9fb 1px, transparent 1px);
  background-size: 30px 30px;
`;

const BlobTop = styled.div`
  position: absolute;
  left: 259px;
  top: 690px;
  width: 211px;
  height: 110px;
  border-radius: 50% 50% 0 0;
  background: #f5f5fc;
`;

const BlobBottom = styled.div`
  position: absolute;
  left: 175px;
  top: 1060px;
  width: 164px;
  height: 46px;
  border-radius: 0 0 50% 50% / 0 0 100% 100%;
  background: #f2f2fa;
`;

const HeroLeft = styled.div`
  width: 1100px;
  flex: none;
  padding-top: 98px;
  position: relative;
`;

const HeroLead = styled.h2`
  margin: 0;
  font-size: 48px;
  line-height: 60px;
  font-weight: 700;
  letter-spacing: -0.02em;
  color: #111827;
`;

const LeadBar = styled.div`
  width: 119px;
  height: 6px;
  margin-top: 8px;
  border-radius: 3px;
  background: linear-gradient(90deg, ${TEAL}, ${TEAL_LIGHT});
`;

const HeroTitle = styled.h1`
  margin: 11px 0 0;
  font-size: 84px;
  line-height: 100px;
  font-weight: 800;
  letter-spacing: -0.047em;
  color: #111827;
`;

const GradientWord = styled.span`
  background: linear-gradient(90deg, ${TEAL_LIGHT}, #e83e8c);
  -webkit-background-clip: text;
  background-clip: text;
  color: transparent;
`;

const HeroSub = styled.p`
  margin: 38px 0 0;
  width: 960px;
  font-size: 29.5px;
  line-height: 49px;
  color: #4b5563;
`;

const AvatarRow = styled.div`
  margin: 35px 0 0 -13px;
  height: 64px;
  display: flex;
  align-items: center;
`;

const DoctorAvatar = styled.div`
  width: 64px;
  height: 64px;
  margin-right: -11.4px;
  flex: none;
  border-radius: 50%;
  border: 3px solid #bfd6f8;
  background: rgba(233, 240, 237, 0.9);
  display: flex;
  align-items: center;
  justify-content: center;
`;

const MoreDoctors = styled.div`
  width: 60px;
  height: 60px;
  border-radius: 50%;
  background: #316e41;
  display: flex;
  align-items: center;
  justify-content: center;
  position: relative;
`;

const SearchCard = styled.div`
  margin: 33px 0 0 1px;
  width: 1099px;
  height: 345px;
  padding: 34px 36px 0;
  position: relative;
  background: #fff;
  border-radius: 22px;
  box-shadow: 0 4px 18px rgba(40, 50, 90, 0.05);

  &::before {
    content: "";
    position: absolute;
    left: 8px;
    right: 8px;
    top: -1px;
    height: 5px;
    background: linear-gradient(90deg, transparent, ${TEAL_LIGHT}, transparent);
  }
`;

const SearchTabs = styled.div`
  display: flex;
  height: 64px;
`;

const SearchTab = styled.div<{ $active?: boolean }>`
  padding: 0 25px;
  display: flex;
  align-items: center;
  font-size: 23.5px;
  color: ${(p) => (p.$active ? "#000" : TEAL)};
  border: 1px solid ${(p) => (p.$active ? "#eeeef1" : "transparent")};
  border-bottom: none;
  border-radius: 10px 10px 0 0;
`;

const SearchRow = styled.div`
  margin-top: 23px;
  display: flex;
  gap: 24px;
  position: relative;
`;

const FieldBox = styled.div<{ $width: number }>`
  width: ${(p) => p.$width}px;
  height: 75px;
  display: flex;
  align-items: center;
  padding: 0 24px;
  border: 1px solid #ebebef;
  border-radius: 10px;
  background: #fff;
  box-shadow: inset 0 -2px 0 #f3f3f6, inset 0 2px 0 #f3f3f6;
`;

const FieldInput = styled.input`
  flex: 1;
  min-width: 0;
  border: none;
  outline: none;
  padding: 0;
  background: none;
  font-family: ${PAGE_FONT};
  font-size: 24px;

  &::placeholder {
    color: #9ca3af;
  }
`;

const SearchButton = styled.div`
  width: 151px;
  height: 76px;
  position: relative;
  z-index: 1;
  display: flex;
  align-items: center;
  justify-content: center;
  border-radius: 10px;
  background: linear-gradient(135deg, ${TEAL}, ${TEAL_LIGHT});
  font-size: 26px;
  font-weight: 600;
  color: #fff;
  box-shadow: 0 8px 16px rgba(60, 120, 110, 0.2);
`;

const PinMark = styled.span`
  position: absolute;
  right: -12px;
  top: 36px;
  display: flex;
`;

const PopularLabel = styled.div`
  margin-top: 27px;
  font-size: 24px;
  line-height: 32px;
  color: #4b5563;
`;

const PopularRow = styled.div`
  margin-top: 13px;
  height: 32px;
  display: flex;
  align-items: center;
  overflow: hidden;
  white-space: nowrap;
  padding-left: 10px;
`;

const PopularLink = styled.span<{ $first?: boolean }>`
  flex: none;
  margin-right: ${(p) => (p.$first ? 47 : 20)}px;
  font-size: 24px;
  color: ${TEAL};
`;

const Comma = styled.span`
  margin-left: 11px;
  font-size: 16px;
  color: #666;
`;

/* ---------- assistant card ---------- */

const AssistantCard = styled.div`
  width: 772px;
  height: 1101px;
  flex: none;
  background: #fff;
  border: 1px solid #ececef;
  border-radius: 28px;
  box-shadow: 0 20px 50px rgba(0, 0, 0, 0.14);
`;

const AssistantHead = styled.div`
  height: 205px;
  padding: 46px 36px 0;
  display: flex;
  align-items: flex-start;
  gap: 25px;
  position: relative;
  border-bottom: 2px solid #e5e7eb;
`;

const BrainBox = styled.div`
  width: 73px;
  height: 74px;
  flex: none;
  display: flex;
  align-items: center;
  justify-content: center;
  background: #f3f4f6;
  border: 1px solid #e5e7eb;
  border-radius: 16px;
`;

const AssistantTitle = styled.div`
  margin-top: -6px;
  font-size: 41px;
  line-height: 50px;
  font-weight: 700;
  letter-spacing: -0.015em;
  color: #1f2937;
`;

const AssistantSub = styled.div`
  margin-top: 8px;
  font-size: 24px;
  line-height: 30px;
  color: #4b5563;
`;

const PoweredBadge = styled.div`
  position: absolute;
  right: 24px;
  top: 23px;
  width: 160px;
  height: 44px;
  display: flex;
  align-items: center;
  justify-content: center;
  gap: 12px;
  background: #f3f4f6;
  border: 1px solid #e2e4e8;
  border-radius: 22px;
  font-size: 17.5px;
  color: #1f2937;
`;

const AssistantBody = styled.div`
  padding: 37px 36px 0;
`;

const HowBox = styled.div`
  height: 239px;
  padding: 24px 24px 0;
  background: #fafafb;
  border-radius: 16px;
`;

const HowHead = styled.div`
  display: flex;
  align-items: center;
  gap: 12px;
`;

const HowIcon = styled.div`
  width: 48px;
  height: 63px;
  border-radius: 50%;
  background: #eaf0ec;
  display: flex;
  align-items: center;
  justify-content: center;
`;

const HowTitle = styled.div`
  font-size: 30px;
  font-weight: 600;
  letter-spacing: -0.02em;
  color: #111827;
`;

const HowText = styled.div`
  margin: 12px 0 0 36px;
  width: 630px;
  font-size: 23.6px;
  line-height: 37.5px;
  color: #4b5563;
`;

const FieldLabel = styled.div`
  height: 34px;
  margin-top: 37px;
  display: flex;
  align-items: center;
  gap: 18px;
  font-size: 24px;
  font-weight: 500;
  color: #111827;
`;

const UploadLabel = styled(FieldLabel)`
  margin-top: 26px;
`;

const ConcernBox = styled.div`
  height: 146px;
  margin-top: 15px;
  padding: 19px 30px 0 24px;
  position: relative;
  overflow: hidden;
  border: 1px solid #e5e7eb;
  border-radius: 10px;
  font-size: 23.6px;
  line-height: 36px;
  color: #9ca3af;
  white-space: nowrap;
`;

const ConcernTrack = styled.div`
  position: absolute;
  right: 0;
  top: 0;
  bottom: 0;
  width: 15px;
  display: flex;
  flex-direction: column;
  justify-content: space-between;
  background: #f1f2f5;
`;

const ConcernThumb = styled.div`
  height: 104px;
  border-radius: 7px;
  background: linear-gradient(180deg, ${TEAL}, ${TEAL_LIGHT});
`;

const ConcernGrip = styled.div`
  height: 15px;
  background: linear-gradient(135deg, #fff 55%, #666 55% 65%, #fff 65%);
  border: 1px solid #dde;
`;

const ChooseBox = styled.div`
  height: 61px;
  margin-top: 16px;
  display: flex;
  align-items: center;
  justify-content: center;
  gap: 12px;
  background: #fafbff;
  border: 1px dashed #5e69ae;
  border-radius: 10px;
  font-size: 24.5px;
  font-weight: 500;
  color: #5e69ae;
`;

const NoFile = styled.div`
  height: 32px;
  margin-top: 12px;
  display: flex;
  align-items: center;
  gap: 13px;
  font-size: 21px;
  color: #4b5563;
`;

const SmartButton = styled.div`
  height: 76px;
  margin-top: 37px;
  display: flex;
  align-items: center;
  justify-content: center;
  gap: 12px;
  background: linear-gradient(135deg, ${TEAL}, ${TEAL_LIGHT});
  border-radius: 12px;
  font-size: 26.7px;
  font-weight: 600;
  color: #fff;
  box-shadow: 0 6px 14px rgba(0, 0, 0, 0.08);
`;

const SecureNote = styled.div`
  height: 28px;
  margin-top: 27px;
  display: flex;
  align-items: center;
  justify-content: center;
  gap: 12px;
  font-size: 21px;
  color: #4b5563;
`;
